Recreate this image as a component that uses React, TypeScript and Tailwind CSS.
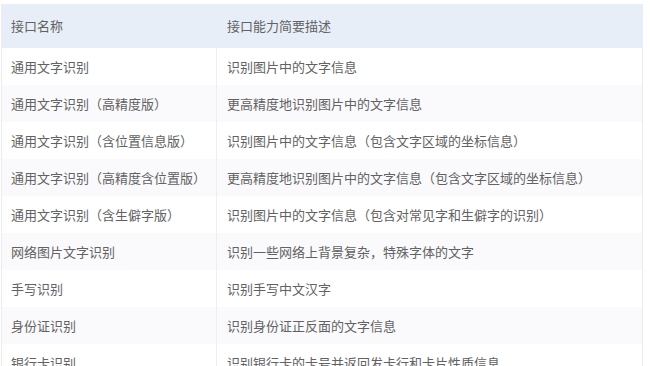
const rows: [string, string][] = [
  ["通用文字识别", "识别图片中的文字信息"],
  ["通用文字识别（高精度版）", "更高精度地识别图片中的文字信息"],
  ["通用文字识别（含位置信息版）", "识别图片中的文字信息（包含文字区域的坐标信息）"],
  ["通用文字识别（高精度含位置版）", "更高精度地识别图片中的文字信息（包含文字区域的坐标信息）"],
  ["通用文字识别（含生僻字版）", "识别图片中的文字信息（包含对常见字和生僻字的识别）"],
  ["网络图片文字识别", "识别一些网络上背景复杂，特殊字体的文字"],
  ["手写识别", "识别手写中文汉字"],
  ["身份证识别", "识别身份证正反面的文字信息"],
  ["银行卡识别", "识别银行卡的卡号并返回发卡行和卡片性质信息"],
];

export default function App() {
  return (
    <div className="w-[650px] h-[366px] overflow-hidden bg-white pt-1 pl-[1px] pr-[7px] font-['Noto_Sans_CJK_SC','Noto_Sans',sans-serif] text-[13px] text-[#626262]">
      <div className="border-x border-[#ececf0]">
        <div className="flex h-[44px] items-center bg-[#e8eef8]">
          <div className="w-[215px] pl-[9px]">接口名称</div>
          <div className="pl-[10px]">接口能力简要描述</div>
        </div>
        {rows.map(([name, desc], i) => (
          <div
            key={name}
            className={`flex h-[37px] items-center ${i % 2 === 1 ? "bg-[#fafafc]" : "bg-white"}`}
          >
            <div className="w-[215px] h-full flex items-center pl-[9px] border-r border-[#eeeef2]">{name}</div>
            <div className="pl-[10px]">{desc}</div>
          </div>
        ))}
      </div>
    </div>
  );
}
